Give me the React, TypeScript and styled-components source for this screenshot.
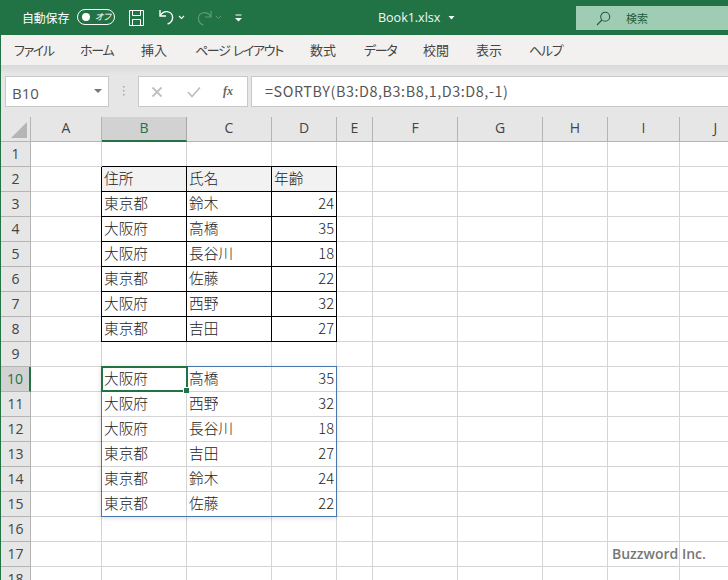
import React from "react";
import styled, { createGlobalStyle } from "styled-components";

const CJK = `"Noto Sans CJK JP", "Noto Sans", sans-serif`;

const Global = createGlobalStyle`
  html, body { margin: 0; padding: 0; background: #fff; overflow: hidden; }
  #root { width: 728px; height: 580px; overflow: hidden; }
`;

const Page = styled.div`
  width: 728px;
  height: 580px;
  position: relative;
  display: flex;
  flex-direction: column;
  overflow: hidden;
  font-family: ${CJK};
  background: #e6e6e6;
  border-left: 1px solid #217346;
  box-sizing: border-box;
`;

const TitleBar = styled.div`
  height: 35px;
  margin-left: -1px;
  flex: none;
  background: #217346;
  color: #fff;
  display: flex;
  align-items: flex-start;
  font-size: 12px;
`;

const AutoSave = styled.span`
  margin: 9px 0 0 22px;
  width: 49px;
  line-height: 17px;
  font-size: 12px;
  white-space: nowrap;
  letter-spacing: -0.2px;
`;

const Toggle = styled.span`
  margin: 9px 0 0 6px;
  width: 38px;
  height: 16px;
  box-sizing: border-box;
  border: 1px solid #fff;
  border-radius: 8px;
  display: flex;
  align-items: center;
  padding-left: 4px;
  &::before {
    content: "";
    width: 8px;
    height: 8px;
    border-radius: 50%;
    background: #fff;
  }
`;

const ToggleText = styled.span`
  font-size: 9px;
  margin-left: 5px;
  line-height: 14px;
  font-style: italic;
  font-feature-settings: "palt";
`;

const QuickIcon = styled.svg<{ $left: number; $top?: number }>`
  flex: none;
  margin-left: ${(p) => p.$left}px;
  margin-top: ${(p) => p.$top ?? 9}px;
  display: block;
`;

const FileName = styled.span`
  margin: 8px 0 0 135px;
  font-family: "Open Sans", "Noto Sans", sans-serif;
  font-size: 12.6px;
  line-height: 19px;
  width: 69px;
  letter-spacing: -0.05px;
  white-space: nowrap;
  opacity: 0.95;
`;

const SearchBox = styled.div`
  margin: 6px 0 0 auto;
  width: 152px;
  height: 24px;
  background: #9fcdb3;
  display: flex;
  align-items: center;
  color: #235c3d;
  font-size: 11px;
  padding-left: 20px;
  box-sizing: border-box;
`;

const SearchLabel = styled.span`
  margin-left: 15px;
`;

const Ribbon = styled.nav`
  height: 30px;
  flex: none;
  background: #f3f1f0;
  display: flex;
  align-items: center;
  padding: 0 0 0 13px;
  font-size: 13px;
  color: #444;
  font-feature-settings: "palt";
  box-sizing: border-box;
`;

const Tab = styled.span<{ $w: number; $tight?: boolean }>`
  width: ${(p) => p.$w}px;
  flex: none;
  white-space: pre;
  line-height: 30px;
  letter-spacing: ${(p) => (p.$tight ? "-1.3px" : "0")};
  word-spacing: ${(p) => (p.$tight ? "1.5px" : "0")};
`;

const FormulaArea = styled.div`
  height: 52px;
  flex: none;
  box-sizing: border-box;
  padding: 11px 0 0 4px;
  display: flex;
  align-items: flex-start;
  background: linear-gradient(#d9d9d9, #e6e6e6 9px);
`;

const Field = styled.div`
  height: 31px;
  box-sizing: border-box;
  background: #fff;
  border: 1px solid #c8c8c8;
  display: flex;
  align-items: center;
`;

const NameBox = styled(Field)`
  width: 104px;
  padding: 2px 6px 0 6px;
  justify-content: space-between;
  font-family: "Open Sans", "Noto Sans", sans-serif;
  font-size: 15px;
  color: #555;
`;

const Caret = styled.span`
  width: 0;
  height: 0;
  margin-top: -4px;
  border-left: 4px solid transparent;
  border-right: 4px solid transparent;
  border-top: 4px solid #777;
`;

const Dots = styled.span`
  width: 29px;
  flex: none;
  display: flex;
  justify-content: center;
  padding-top: 10px;
`;

const ButtonsBox = styled(Field)`
  width: 110px;
  padding-left: 12px;
  color: #666;
`;

const CheckIcon = styled.svg`
  margin-left: 24px;
  display: block;
`;

const Fx = styled.span`
  font-family: "Liberation Serif", serif;
  font-style: italic;
  font-weight: 700;
  font-size: 12px;
  color: #666;
  margin-left: 22px;
`;

const FormulaInput = styled(Field)`
  flex: 1;
  margin-left: 3px;
  border-right: none;
  padding: 0 0 2px 13px;
  font-family: ${CJK};
  font-size: 14.4px;
  color: #555;
  white-space: nowrap;
  letter-spacing: 0.55px;
`;

const Sheet = styled.div`
  flex: 1;
  margin-left: -1px;
  display: grid;
  grid-template-columns: 30px 71px 85px 85px 65px 36px 85px 85px 65px 72px 72px;
  grid-auto-rows: 25px;
  grid-template-rows: 25px;
  background: #fff;
  position: relative;
  border-left: 1px solid #217346;
  box-sizing: border-box;
`;

const Corner = styled.div`
  background: #e6e6e6;
  border-right: 1px solid #b4b4b4;
  border-bottom: 1px solid #b4b4b4;
  box-sizing: border-box;
  position: relative;
  &::after {
    content: "";
    position: absolute;
    right: 3px;
    bottom: 3px;
    border-style: solid;
    border-width: 0 0 16px 16px;
    border-color: transparent transparent #b5b5b5 transparent;
  }
`;

const ColHead = styled.div<{ $active?: boolean }>`
  box-sizing: border-box;
  background: ${(p) => (p.$active ? "#d2d2d2" : "#e6e6e6")};
  border-right: 1px solid ${(p) => (p.$active ? "#a8a8a8" : "#b4b4b4")};
  border-bottom: ${(p) => (p.$active ? "2px solid #217346" : "1px solid #b4b4b4")};
  color: ${(p) => (p.$active ? "#217346" : "#444")};
  text-align: center;
  font-size: 14px;
  font-family: "Open Sans", "Noto Sans", sans-serif;
  line-height: 22px;
`;

const RowHead = styled.div<{ $active?: boolean }>`
  box-sizing: border-box;
  background: ${(p) => (p.$active ? "#d2d2d2" : "#e6e6e6")};
  border-right: ${(p) => (p.$active ? "2px solid #217346" : "1px solid #b4b4b4")};
  border-bottom: 1px solid #b4b4b4;
  color: ${(p) => (p.$active ? "#217346" : "#444")};
  text-align: center;
  font-size: 14px;
  font-family: "Open Sans", "Noto Sans", sans-serif;
  line-height: 24px;
`;

const Cell = styled.div<{ $boxed?: boolean; $head?: boolean; $num?: boolean }>`
  box-sizing: border-box;
  border-right: 1px solid #d4d4d4;
  border-bottom: 1px solid #d4d4d4;
  background: ${(p) => (p.$head ? "#f2f2f2" : "#fff")};
  position: relative;
  font-size: 14.67px;
  font-weight: 300;
  color: #222;
  line-height: 22px;
  padding: 0 2px 0 2px;
  text-align: ${(p) => (p.$num ? "right" : "left")};
  white-space: nowrap;
  ${(p) =>
    p.$boxed &&
    `
    border-right: 1px solid #000;
    border-bottom: 1px solid #000;
    box-shadow: -1px 0 0 #000, 0 -1px 0 #000;
  `}
`;

const SpillRange = styled.div`
  position: absolute;
  left: 100px;
  top: 249px;
  width: 236px;
  height: 151px;
  box-sizing: border-box;
  border: 1px solid #4a76b0;
  box-shadow: 0 1px 5px rgba(0, 0, 0, 0.14);
  pointer-events: none;
`;

const ActiveCell = styled.div`
  position: absolute;
  left: 100px;
  top: 249px;
  width: 87px;
  height: 26px;
  box-sizing: border-box;
  border: 2px solid #217346;
  pointer-events: none;
  &::after {
    content: "";
    position: absolute;
    right: -3px;
    bottom: -3px;
    width: 5px;
    height: 5px;
    background: #217346;
    border: 1px solid #fff;
    border-right: none;
    border-bottom: none;
  }
`;

const Watermark = styled.div`
  position: absolute;
  left: 611px;
  top: 544px;
  font-family: "Open Sans", "Noto Sans", sans-serif;
  font-weight: 600;
  font-size: 14px;
  line-height: 20px;
  color: #777;
  white-space: nowrap;
`;

const columns = ["A", "B", "C", "D", "E", "F", "G", "H", "I", "J"];

const data: Record<number, [string, string, string]> = {
  2: ["住所", "氏名", "年齢"],
  3: ["東京都", "鈴木", "24"],
  4: ["大阪府", "高橋", "35"],
  5: ["大阪府", "長谷川", "18"],
  6: ["東京都", "佐藤", "22"],
  7: ["大阪府", "西野", "32"],
  8: ["東京都", "吉田", "27"],
  10: ["大阪府", "高橋", "35"],
  11: ["大阪府", "西野", "32"],
  12: ["大阪府", "長谷川", "18"],
  13: ["東京都", "吉田", "27"],
  14: ["東京都", "鈴木", "24"],
  15: ["東京都", "佐藤", "22"],
};

const tabs: [string, number, boolean][] = [
  ["ファイル", 66, true],
  ["ホーム", 61, true],
  ["挿入", 54, false],
  ["ページ レイアウト", 115, true],
  ["数式", 54, false],
  ["データ", 59, true],
  ["校閲", 53, false],
  ["表示", 53, false],
  ["ヘルプ", 60, true],
];

const rows = Array.from({ length: 18 }, (_, i) => i + 1);

export default function App() {
  return (
    <Page>
      <Global />
      <TitleBar>
        <AutoSave>自動保存</AutoSave>
        <Toggle>
          <ToggleText>オフ</ToggleText>
        </Toggle>
        <QuickIcon $left={13} width="17" height="18" viewBox="0 0 17 18" fill="none" stroke="#fff" strokeWidth="1">
          <path d="M1.5 1.5h14v15h-14z" />
          <path d="M4.5 1.5v5h8v-5M4.5 16.5v-6h8v6" />
        </QuickIcon>
        <QuickIcon $left={13} $top={8} width="17" height="18" viewBox="0 0 17 18" fill="none" stroke="#fff" strokeWidth="1.4">
          <path d="M2 2v6h6" />
          <path d="M2.3 7.6C4 4.6 6.4 3.4 9 3.6c3.4.3 5.6 2.8 5.6 5.8 0 3.2-2 5.4-5 6.6" />
        </QuickIcon>
        <QuickIcon $left={3} $top={15} width="7" height="5" viewBox="0 0 7 5" fill="none" stroke="#fff" strokeWidth="1.1">
          <path d="M1 1l2.5 2.5L6 1" />
        </QuickIcon>
        <QuickIcon $left={11} $top={9} width="17" height="17" viewBox="0 0 17 17" fill="none" stroke="#5d9a78" strokeWidth="1.2">
          <path d="M15 2v6H9" />
          <path d="M14.7 7.6C13 4.6 10.6 3.4 8 3.6c-3.4.3-5.6 2.8-5.6 5.8 0 3.2 2 5.4 5 6.6" />
        </QuickIcon>
        <QuickIcon $left={2} $top={15} width="7" height="5" viewBox="0 0 7 5" fill="none" stroke="#5d9a78" strokeWidth="1">
          <path d="M1 1l2.5 2.5L6 1" />
        </QuickIcon>
        <QuickIcon $left={12} $top={14} width="9" height="8" viewBox="0 0 9 8" fill="none" stroke="#fff" strokeWidth="1">
          <path d="M1.5 1h6" />
          <path d="M1 4h7L4.5 7.5z" fill="#fff" stroke="none" />
        </QuickIcon>
        <FileName>Book1.xlsx</FileName>
        <QuickIcon $left={1} $top={16} width="7" height="4" viewBox="0 0 7 4" fill="#fff" stroke="none">
          <path d="M.5 0h6L3.5 3.5z" />
        </QuickIcon>
        <SearchBox>
          <svg width="15" height="15" viewBox="0 0 15 15" fill="none" stroke="#235c3d" strokeWidth="1.1">
            <circle cx="9.2" cy="5.8" r="4.5" />
            <path d="M5.9 9L1 14" />
          </svg>
          <SearchLabel>検索</SearchLabel>
        </SearchBox>
      </TitleBar>
      <Ribbon>
        {tabs.map(([t, w, tight]) => (
          <Tab key={t} $w={w} $tight={tight}>
            {t}
          </Tab>
        ))}
      </Ribbon>
      <FormulaArea>
        <NameBox>
          B10
          <Caret />
        </NameBox>
        <Dots>
          <svg width="3" height="11" viewBox="0 0 3 11" fill="#a5a5a5">
            <rect x="1" y="0" width="1.5" height="1.5" />
            <rect x="1" y="4" width="1.5" height="1.5" />
            <rect x="1" y="8" width="1.5" height="1.5" />
          </svg>
        </Dots>
        <ButtonsBox>
          <svg width="12" height="12" viewBox="0 0 12 12" fill="none" stroke="#c0c0c0" strokeWidth="1.8">
            <path d="M1.5 1.5l9 9M10.5 1.5l-9 9" />
          </svg>
          <CheckIcon width="14" height="12" viewBox="0 0 14 12" fill="none" stroke="#c0c0c0" strokeWidth="1.8">
            <path d="M1 6l4 4.5L13 1.5" />
          </CheckIcon>
          <Fx>fx</Fx>
        </ButtonsBox>
        <FormulaInput>=SORTBY(B3:D8,B3:B8,1,D3:D8,-1)</FormulaInput>
      </FormulaArea>
      <Sheet>
        <Corner />
        {columns.map((c) => (
          <ColHead key={c} $active={c === "B"}>
            {c}
          </ColHead>
        ))}
        {rows.map((r) => {
          const row = data[r];
          const boxed = r >= 2 && r <= 8;
          return (
            <React.Fragment key={r}>
              <RowHead $active={r === 10}>{r}</RowHead>
              {columns.map((c, i) => {
                const idx = i - 1;
                const inTable = idx >= 0 && idx <= 2;
                return (
                  <Cell
                    key={c}
                    $boxed={boxed && inTable}
                    $head={r === 2 && inTable}
                    $num={idx === 2 && r !== 2}
                  >
                    {inTable && row ? row[idx] : null}
                  </Cell>
                );
              })}
            </React.Fragment>
          );
        })}
        <SpillRange />
        <ActiveCell />
      </Sheet>
      <Watermark>Buzzword Inc.</Watermark>
    </Page>
  );
}
